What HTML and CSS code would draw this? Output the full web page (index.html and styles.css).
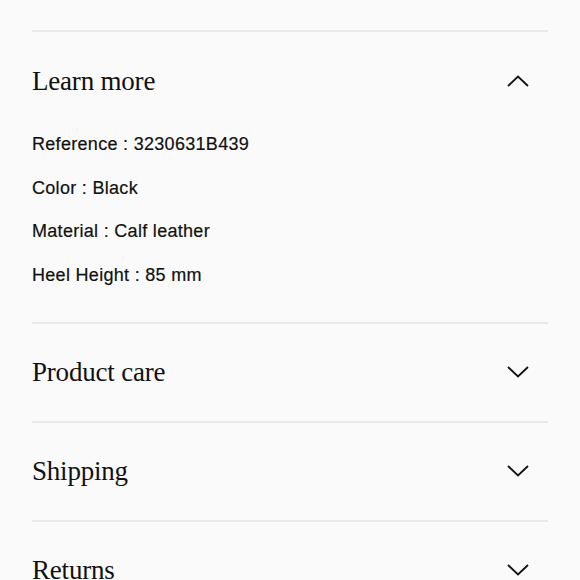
FILE: index.html
```html
<!DOCTYPE html>
<html lang="en">
<head>
    <meta charset="UTF-8">
    <meta name="viewport" content="width=device-width, initial-scale=1.0">
    <title>Product details</title>
    <link rel="stylesheet" href="styles.css">
</head>
<body>
    <div class="accordion">
        <div class="panel open">
            <div class="panel-header">
                <h2>Learn more</h2>
                <svg class="chevron" width="22" height="12" viewBox="0 0 22 12"><path d="M1 11 L11 1.5 L21 11" fill="none" stroke="#111" stroke-width="1.8"/></svg>
            </div>
            <ul class="panel-body">
                <li>Reference : 3230631B439</li>
                <li>Color : Black</li>
                <li>Material : Calf leather</li>
                <li>Heel Height : 85 mm</li>
            </ul>
        </div>

        <div class="panel">
            <div class="panel-header">
                <h2>Product care</h2>
                <svg class="chevron" width="22" height="12" viewBox="0 0 22 12"><path d="M1 1 L11 10.5 L21 1" fill="none" stroke="#111" stroke-width="1.8"/></svg>
            </div>
        </div>

        <div class="panel">
            <div class="panel-header">
                <h2>Shipping</h2>
                <svg class="chevron" width="22" height="12" viewBox="0 0 22 12"><path d="M1 1 L11 10.5 L21 1" fill="none" stroke="#111" stroke-width="1.8"/></svg>
            </div>
        </div>

        <div class="panel">
            <div class="panel-header">
                <h2>Returns</h2>
                <svg class="chevron" width="22" height="12" viewBox="0 0 22 12"><path d="M1 1 L11 10.5 L21 1" fill="none" stroke="#111" stroke-width="1.8"/></svg>
            </div>
        </div>
    </div>
</body>
</html>
```

FILE: styles.css
```css
html, body {
    background: #fafafa;
}
body {
    margin: 0;
    padding: 30px 32px 0;
    color: #111;
    font-family: "Liberation Sans", Arial, sans-serif;
}
.panel {
    border-top: 2px solid #e9e9e9;
}
.panel-header {
    height: 97px;
    display: flex;
    align-items: center;
    justify-content: space-between;
    padding-right: 19px;
}
.panel-header h2 {
    margin: 0;
    font-family: "Liberation Serif", "Times New Roman", serif;
    font-weight: normal;
    font-size: 27px;
    line-height: 30px;
    letter-spacing: -0.2px;
}
.chevron {
    display: block;
}
.panel-body {
    list-style: none;
    margin: 0;
    padding: 0 0 32px;
    display: flex;
    flex-direction: column;
    gap: 13.5px;
}
.panel-body li {
    font-size: 18px;
    line-height: 30px;
    letter-spacing: 0.3px;
    -webkit-text-stroke: 0.2px #111;
}
```
